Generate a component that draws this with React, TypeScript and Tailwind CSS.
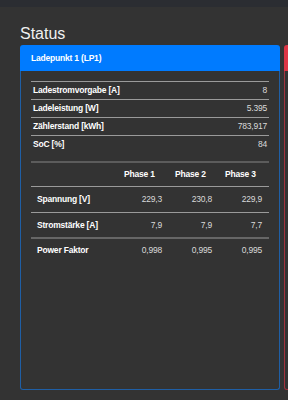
import React from 'react';

const SUMMARY = [
    { label: 'Ladestromvorgabe [A]', value: '8' },
    { label: 'Ladeleistung [W]', value: '5.395' },
    { label: 'Zählerstand [kWh]', value: '783,917' },
    { label: 'SoC [%]', value: '84' },
];

const PHASES = [
    { label: 'Spannung [V]', values: ['229,3', '230,8', '229,9'], line: 'border-t border-[#9a9a9a]' },
    { label: 'Stromstärke [A]', values: ['7,9', '7,9', '7,7'], line: 'border-t border-[#9a9a9a]' },
    { label: 'Power Faktor', values: ['0,998', '0,995', '0,995'], line: 'border-t-2 border-[#666666]' },
];

export default function App() {
    return (
        <div className="w-[288px] h-[400px] overflow-hidden bg-[#333333] font-['Liberation_Sans',Arial,sans-serif]">
            <div className="h-[7px] bg-[#2b2d32]" />
            <h2 className="mt-[17px] mb-[2px] pl-[20px] text-[16px] leading-[19px] text-[#f0f0f0] font-normal">Status</h2>

            <div className="flex gap-[4px] pl-[20px] w-[400px]">
                {/* Ladepunkt card */}
                <div className="w-[260px] h-[345px] flex flex-col flex-none">
                    <div className="h-[26px] rounded-t-[3px] bg-[#007bff] flex items-center pl-[11px] text-[8.5px] tracking-[-0.2px] font-bold text-white">
                        Ladepunkt 1 (LP1)
                    </div>
                    <div className="flex-1 border-x border-b border-[#1f5fa6] rounded-b-[3px] p-[10px]">
                        {/* summary table */}
                        <div className="text-[8.5px] tracking-[-0.2px]">
                            {SUMMARY.map(row => (
                                <div key={row.label} className="h-[18px] border-t border-[#9a9a9a] flex items-center justify-between px-[2px]">
                                    <span className="font-bold text-white">{row.label}</span>
                                    <span className="text-[#dadada]">{row.value}</span>
                                </div>
                            ))}
                        </div>

                        {/* phase table */}
                        <div className="mt-[8px] text-[8.5px] tracking-[-0.2px]">
                            <div className="h-[26px] border-t-2 border-b border-t-[#5c5c5c] border-b-[#9a9a9a] grid grid-cols-[87px_50px_50px_50px] items-center">
                                <span />
                                <span className="pl-[6px] font-bold text-white">Phase 1</span>
                                <span className="pl-[7px] font-bold text-white">Phase 2</span>
                                <span className="pl-[7px] font-bold text-white">Phase 3</span>
                            </div>
                            {PHASES.map((row, i) => (
                                <div key={row.label} className={`h-[25px] grid grid-cols-[87px_50px_50px_50px] items-center ${i === 0 ? '' : row.line}`}>
                                    <span className="pl-[6px] font-bold text-white">{row.label}</span>
                                    {row.values.map((v, j) => (
                                        <span key={j} className="pr-[6px] text-right text-[#dadada]">{v}</span>
                                    ))}
                                </div>
                            ))}
                        </div>
                    </div>
                </div>

                {/* next card, cut off */}
                <div className="w-[100px] h-[345px] flex flex-col flex-none">
                    <div className="h-[26px] rounded-t-[3px] bg-[#dc3545]" />
                    <div className="flex-1 border-x border-b border-[#a3333e] rounded-b-[3px]" />
                </div>
            </div>
        </div>
    );
}
